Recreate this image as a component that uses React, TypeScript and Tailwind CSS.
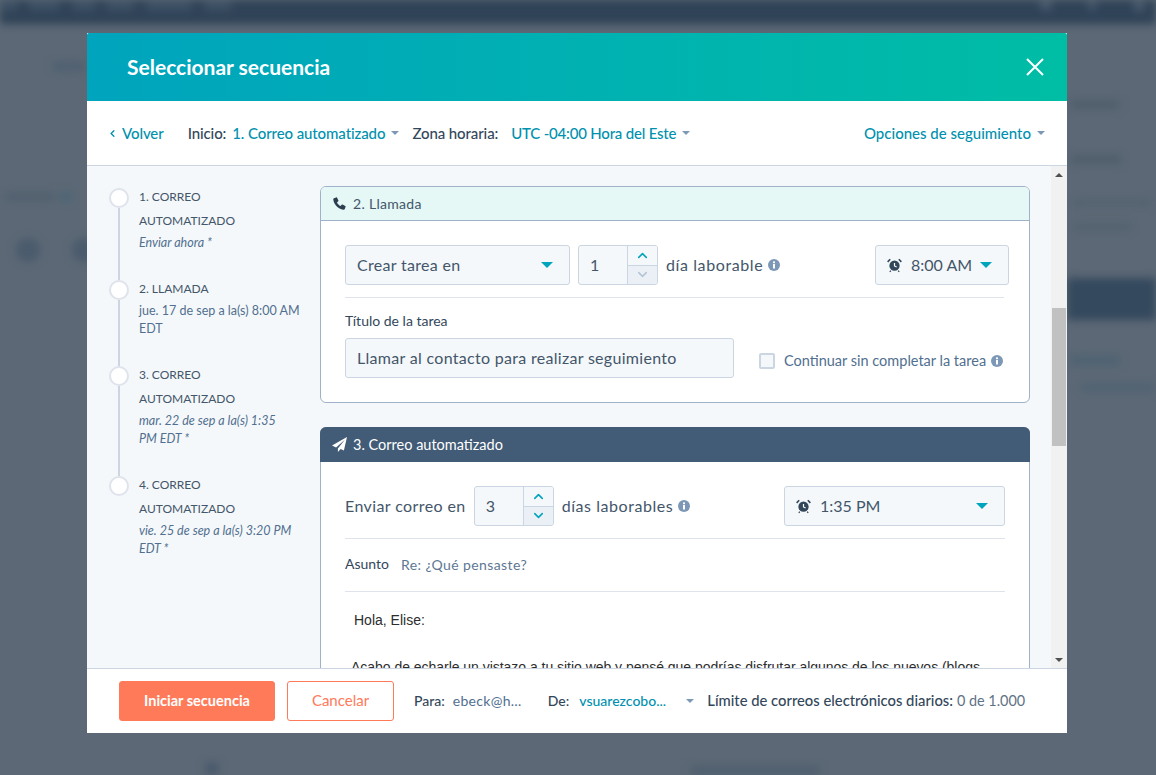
import { ChevronDown, ChevronLeft, ChevronUp } from "lucide-react"

function Caret({ color = "border-t-[#7c98b6]", size = "sm" }: { color?: string; size?: "sm" | "lg" }) {
  const box = size === "lg" ? "border-x-[6px] border-t-[6px]" : "border-x-[4.5px] border-t-[4.5px]"
  return <span className={`inline-block h-0 w-0 shrink-0 border-x-transparent ${box} ${color}`} />
}

function Info() {
  return (
    <svg width="12" height="12" viewBox="0 0 12 12" className="shrink-0">
      <circle cx="6" cy="6" r="6" fill="#7c98b6" />
      <rect x="5" y="5" width="2" height="4.5" fill="#fff" />
      <rect x="5" y="2.4" width="2" height="1.8" fill="#fff" />
    </svg>
  )
}

function Alarm() {
  return (
    <svg width="15" height="15" viewBox="0 0 14 14" className="shrink-0">
      <circle cx="7" cy="7.2" r="4.8" fill="#33475b" />
      <path d="M7 4.6V7.4L9 8.4" stroke="#fff" strokeWidth="1.1" fill="none" />
      <path d="M.6 3.6 3 1.2M13.4 3.6 11 1.2" stroke="#33475b" strokeWidth="1.5" fill="none" />
      <path d="M2.6 12.9 3.6 11.8M11.4 12.9 10.4 11.8" stroke="#33475b" strokeWidth="1.2" fill="none" />
    </svg>
  )
}

function PhoneIcon() {
  return (
    <svg width="13" height="13" viewBox="0 0 13 13" className="shrink-0">
      <path d="M3.2.4 1 1.2C.4 1.5.2 2 .3 2.8c.6 4.8 5 9.4 9.9 9.9.8.1 1.3-.1 1.6-.7l.8-2.2c.1-.4 0-.7-.4-.9L9.6 7.6c-.3-.2-.6-.1-.9.2L7.6 9C6 8.2 4.800 7 4 5.400l1.200-1.100c.3-.3.4-.6.2-.9L4.100.8C3.900.4 3.600.3 3.200.4Z" fill="#2d3e50" />
    </svg>
  )
}

function PlaneIcon() {
  return (
    <svg width="15" height="15" viewBox="0 0 14 14" className="shrink-0">
      <path d="M14 0 0 8l3.800 1.800L12 2.600 5.500 10.700V14l2.600-2.900 3 1.400Z" fill="#fff" />
    </svg>
  )
}

function Stepper({ value, dim }: { value: string; dim?: boolean }) {
  return (
    <div className="flex h-10 w-20 shrink-0 overflow-hidden rounded-[3px] border border-[#cbd6e2] bg-[#f5f8fa]">
      <div className="flex flex-1 items-center pl-[11px] text-base text-[#43566a]">{value}</div>
      <div className="flex w-[30px] flex-col border-l border-[#cbd6e2] bg-[#eaf0f6]">
        <div className="flex flex-1 items-center justify-center border-b border-[#cbd6e2] bg-[#f5f8fa]">
          <ChevronUp size={15} strokeWidth={2.5} className="text-[#00a4bd]" />
        </div>
        <div className="flex flex-1 items-center justify-center">
          <ChevronDown size={15} strokeWidth={2.5} className={dim ? "text-[#b6c5d6]" : "text-[#00a4bd]"} />
        </div>
      </div>
    </div>
  )
}

function Step({ title, sub, last, plain }: { title: string[]; sub: string[]; last?: boolean; plain?: boolean }) {
  return (
    <div className="flex gap-[10px]">
      <div className="flex w-5 shrink-0 flex-col items-center">
        <span className="h-5 w-5 shrink-0 rounded-full border-2 border-[#dfe3eb] bg-white" />
        {!last && <span className="w-0.5 flex-1 bg-[#cbd6e2]" />}
      </div>
      <div className="-mt-[3px] pb-[29px]">
        {title.map((t) => (
          <div key={t} className="text-xs leading-6 text-[#43566a]">{t}</div>
        ))}
        <div className="mt-px -mb-px">
          {sub.map((s) => (
            <div key={s} className={plain ? "whitespace-nowrap text-[12.5px] leading-[18px] text-[#516f90]" : "whitespace-nowrap text-[12.5px] italic leading-[18px] text-[#516f90]"}>{s}</div>
          ))}
        </div>
      </div>
    </div>
  )
}

export default function App() {
  return (
    <div className="relative flex h-[775px] w-[1156px] overflow-hidden bg-[#5c6875] pl-[87px] pt-[33px] font-['Lato',sans-serif]">
      {/* blurred page behind the modal */}
      <div className="absolute inset-0 blur-[4px]">
        <div className="h-[24px] bg-[#2f4257]" />
        <div className="absolute left-0 top-0 h-[11px] w-[18px] rounded bg-[#3d5064]" />
        <div className="absolute left-[28px] top-0 h-[11px] w-[32px] rounded bg-[#3d5064]" />
        <div className="absolute left-[72px] top-0 h-[11px] w-[24px] rounded bg-[#3d5064]" />
        <div className="absolute left-[106px] top-0 h-[11px] w-[28px] rounded bg-[#3d5064]" />
        <div className="absolute left-[146px] top-0 h-[11px] w-[46px] rounded bg-[#3d5064]" />
        <div className="absolute left-[204px] top-0 h-[11px] w-[28px] rounded bg-[#3d5064]" />
        <div className="absolute left-[1040px] top-0 h-[10px] w-[12px] rounded bg-[#4a5c6e]" />
        <div className="absolute left-[1088px] top-0 h-[10px] w-[8px] rounded bg-[#4a5c6e]" />
        <div className="absolute left-[1134px] top-0 h-[12px] w-[10px] rounded bg-[#4a5c6e]" />
        <div className="absolute left-[52px] top-[62px] h-[9px] w-[34px] rounded bg-[#4f6071]" />
        <div className="absolute left-[5px] top-[193px] h-[8px] w-[50px] rounded bg-[#505f6e]" />
        <div className="absolute left-[60px] top-[192px] h-[10px] w-[12px] rounded bg-[#4b6676]" />
        <div className="absolute left-[16px] top-[238px] h-6 w-6 rounded-full bg-[#4a5b6d]" />
        <div className="absolute left-[72px] top-[238px] h-6 w-6 rounded-full bg-[#4a5b6d]" />
        <div className="absolute left-[1067px] top-[278px] h-[42px] w-[89px] bg-[#34495e]" />
        <div className="absolute left-[1070px] top-[100px] h-[9px] w-[50px] rounded bg-[#4f5d6c]" />
        <div className="absolute left-[1070px] top-[155px] h-[9px] w-[52px] rounded bg-[#4f5d6c]" />
        <div className="absolute left-[1072px] top-[200px] h-[5px] w-[80px] rounded bg-[#505f6e]" />
        <div className="absolute left-[1072px] top-[224px] h-[6px] w-[60px] rounded bg-[#505f6e]" />
        <div className="absolute left-[1070px] top-[356px] h-[9px] w-[50px] rounded bg-[#4d6272]" />
        <div className="absolute left-[1080px] top-[384px] h-[7px] w-[76px] rounded bg-[#4d6272]" />
        <div className="absolute left-[205px] top-[762px] h-[13px] w-[14px] rounded-full bg-[#46586b]" />
        <div className="absolute left-[690px] top-[766px] h-[9px] w-[130px] rounded bg-[#4e5e6e]" />
      </div>

      <div className="relative flex h-[700px] w-[980px] flex-col bg-white">
        <header className="flex h-[68px] shrink-0 items-center justify-between rounded-t-[2px] bg-gradient-to-r from-[#00a4bd] to-[#00bda5] pl-10 pr-[23px]">
          <h1 className="text-[21px] font-bold text-white">Seleccionar secuencia</h1>
          <svg width="18" height="18" viewBox="0 0 18 18">
            <path d="M1 1 17 17M17 1 1 17" stroke="#fff" strokeWidth="2" />
          </svg>
        </header>

        <div className="flex h-[65px] shrink-0 items-center border-b border-[#cbd6e2] pl-[22px] pr-[22px] text-[15px] font-medium text-[#33475b]">
          <ChevronLeft size={11} strokeWidth={3} className="-ml-[2px] text-[#0091ae]" />
          <span className="ml-[4px] tracking-[-0.1px] text-[#0091ae]">Volver</span>
          <span className="ml-6 tracking-[-0.1px]">Inicio:</span>
          <span className="ml-[6px] tracking-[-0.1px] text-[#0091ae]">1. Correo automatizado</span>
          <span className="ml-[6px] flex"><Caret /></span>
          <span className="ml-[13px] tracking-[-0.1px]">Zona horaria:</span>
          <span className="ml-[13px] tracking-[-0.2px] text-[#0091ae]">UTC -04:00 Hora del Este</span>
          <span className="ml-[6px] flex"><Caret /></span>
          <span className="ml-auto text-[#0091ae]">Opciones de seguimiento</span>
          <span className="ml-[6px] flex"><Caret /></span>
        </div>

        <div className="flex min-h-0 flex-1 bg-[#f5f8fa]">
          <aside className="w-[233px] shrink-0 pl-[22px] pt-[22px]">
            <Step title={["1. CORREO", "AUTOMATIZADO"]} sub={["Enviar ahora *"]} />
            <Step title={["2. LLAMADA"]} sub={["jue. 17 de sep a la(s) 8:00 AM", "EDT"]} plain />
            <Step title={["3. CORREO", "AUTOMATIZADO"]} sub={["mar. 22 de sep a la(s) 1:35", "PM EDT *"]} />
            <Step title={["4. CORREO", "AUTOMATIZADO"]} sub={["vie. 25 de sep a la(s) 3:20 PM", "EDT *"]} last />
          </aside>

          <main className="min-w-0 flex-1 overflow-hidden pt-5">
            <section className="h-[217px] w-[710px] rounded-[6px] border border-[#9fb2c9] bg-white">
              <div className="flex h-[34px] items-center gap-[7px] rounded-t-[5px] border-b border-[#9fb2c9] bg-[#e5f8f6] pl-3 text-sm tracking-[0.3px] text-[#43566a]">
                <PhoneIcon />
                <span>2. Llamada</span>
              </div>
              <div className="px-6 pt-6">
                <div className="flex items-center">
                  <div className="flex h-10 w-[225px] items-center justify-between rounded-[3px] border border-[#cbd6e2] bg-[#f5f8fa] pl-[11px] pr-4 text-base tracking-[0.3px] text-[#43566a]">
                    Crear tarea en
                    <Caret color="border-t-[#00a4bd]" size="lg" />
                  </div>
                  <div className="ml-2"><Stepper value="1" dim /></div>
                  <span className="ml-2 text-base tracking-[0.6px] text-[#43566a]">día laborable</span>
                  <span className="ml-[5px]"><Info /></span>
                  <div className="ml-auto mr-[-4px] flex h-10 w-[134px] items-center rounded-[3px] border border-[#cbd6e2] bg-[#f5f8fa] pl-[11px] text-base text-[#43566a]">
                    <Alarm />
                    <span className="ml-[9px]">8:00 AM</span>
                    <span className="ml-2 flex"><Caret color="border-t-[#00a4bd]" size="lg" /></span>
                  </div>
                </div>
                <div className="mt-3 h-px w-[659px] bg-[#dfe3eb]" />
                <label className="mt-[13px] block text-sm leading-5 text-[#33475b]">Título de la tarea</label>
                <div className="mt-[7px] flex items-center">
                  <div className="flex h-10 w-[389px] items-center rounded-[3px] border border-[#cbd6e2] bg-[#f5f8fa] pl-[11px] text-base tracking-[0.3px] text-[#43566a]">
                    Llamar al contacto para realizar seguimiento
                  </div>
                  <div className="mt-[6px] flex items-center">
                    <span className="ml-[25px] h-4 w-4 rounded-[2px] border-2 border-[#cbd6e2] bg-[#f5f8fa]" />
                    <span className="ml-[9px] text-[14.5px] text-[#516f90]">Continuar sin completar la tarea</span>
                    <span className="ml-[5px]"><Info /></span>
                  </div>
                </div>
              </div>
            </section>

            <section className="mt-6 h-[400px] w-[710px] rounded-t-[6px] border border-[#9fb2c9] bg-white">
              <div className="-m-px flex h-[35px] items-center gap-[6px] rounded-t-[6px] bg-[#425b76] pl-[12px] text-[14.5px] text-white">
                <PlaneIcon />
                <span>3. Correo automatizado</span>
              </div>
              <div className="px-6 pt-[25px]">
                <div className="flex items-center">
                  <span className="text-base tracking-[0.4px] text-[#43566a]">Enviar correo en</span>
                  <div className="ml-2"><Stepper value="3" /></div>
                  <span className="ml-2 text-base tracking-[0.55px] text-[#43566a]">días laborables</span>
                  <span className="ml-[5px]"><Info /></span>
                  <div className="ml-auto flex h-10 w-[221px] items-center rounded-[3px] border border-[#cbd6e2] bg-[#f5f8fa] pl-[11px] pr-4 text-base text-[#43566a]">
                    <Alarm />
                    <span className="ml-[9px]">1:35 PM</span>
                    <span className="ml-auto flex"><Caret color="border-t-[#00a4bd]" size="lg" /></span>
                  </div>
                </div>
                <div className="mt-3 h-px w-[660px] bg-[#dfe3eb]" />
                <div className="flex h-[52px] items-center">
                  <span className="-mt-[2px] text-sm text-[#33475b]">Asunto</span>
                  <span className="ml-3 text-sm tracking-[0.4px] text-[#5d7793]">Re: ¿Qué pensaste?</span>
                </div>
                <div className="h-px w-[660px] bg-[#dfe3eb]" />
                <p className="ml-[9px] mt-[20px] font-['Liberation_Sans',sans-serif] text-sm leading-4 text-[#2d2d2d]">Hola, Elise:</p>
                <p className="ml-[6px] mt-[31px] whitespace-nowrap font-['Liberation_Sans',sans-serif] text-sm leading-4 tracking-[-0.03px] text-[#2d2d2d]">
                  Acabo de echarle un vistazo a tu sitio web y pensé que podrías disfrutar algunos de los nuevos (blogs
                </p>
              </div>
            </section>
          </main>

          <div className="flex w-4 shrink-0 flex-col items-center bg-[#f1f1f1]">
            <div className="flex h-[17px] shrink-0 items-center justify-center">
              <span className="h-0 w-0 border-x-[4px] border-b-[4px] border-x-transparent border-b-[#505050]" />
            </div>
            <div className="ml-[-1px] mt-[125px] h-[138px] w-[14px] shrink-0 bg-[#c1c1c1]" />
            <div className="mt-auto flex h-[17px] shrink-0 items-center justify-center">
              <span className="h-0 w-0 border-x-[4px] border-t-[4px] border-x-transparent border-t-[#505050]" />
            </div>
          </div>
        </div>

        <footer className="flex h-[65px] shrink-0 items-center border-t border-[#cbd6e2] bg-white pl-8 text-sm">
          <button className="h-10 w-[156px] rounded-[3px] border border-[#ff7a59] bg-[#ff7a59] text-[14.5px] font-bold text-white">Iniciar secuencia</button>
          <button className="ml-3 h-10 w-[107px] rounded-[3px] border border-[#ff7a59] bg-white text-[15px] text-[#ff7a59]">Cancelar</button>
          <span className="ml-5 font-medium text-[#33475b]">Para:</span>
          <span className="ml-2 w-[71px] whitespace-nowrap tracking-[0.3px] text-[#516f90]">ebeck@h…</span>
          <span className="ml-6 font-medium text-[#33475b]">De:</span>
          <span className="ml-[10px] w-[88px] whitespace-nowrap font-medium text-[#0091ae]">vsuarezcobo...</span>
          <span className="ml-[19px] flex"><Caret /></span>
          <span className="ml-[13px] text-[14.8px] font-medium text-[#33475b]">Límite de correos electrónicos diarios:</span>
          <span className="ml-1 text-[14.4px] text-[#5f7285]">0 de 1.000</span>
        </footer>
      </div>
    </div>
  )
}
